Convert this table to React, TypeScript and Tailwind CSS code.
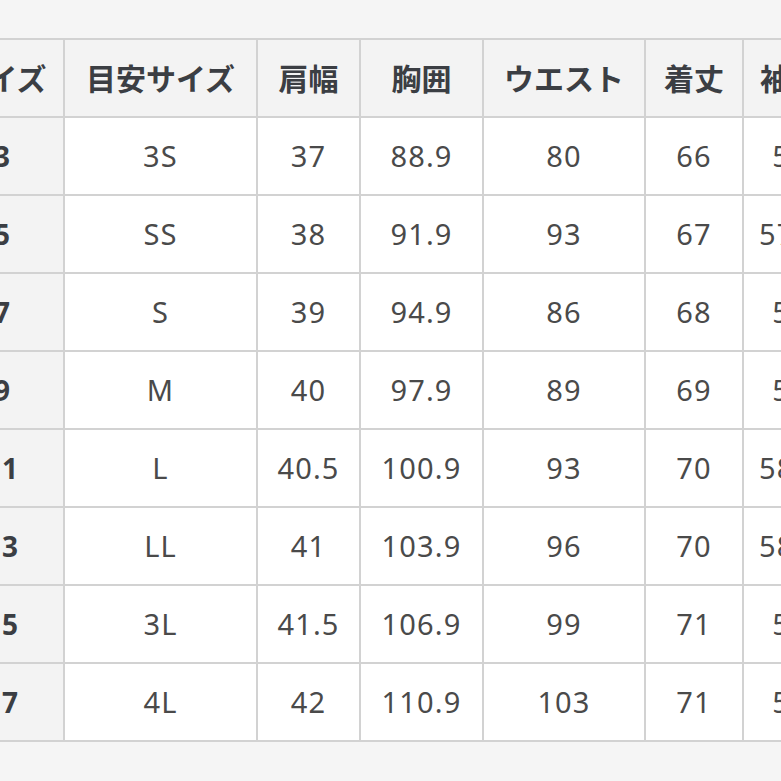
import React from "react";

type Row = {
  size: string;
  guide: string;
  shoulder: string;
  chest: string;
  waist: string;
  length: string;
  sleeve: string;
};

const rows: Row[] = [
  { size: "3", guide: "3S", shoulder: "37", chest: "88.9", waist: "80", length: "66", sleeve: "56" },
  { size: "5", guide: "SS", shoulder: "38", chest: "91.9", waist: "93", length: "67", sleeve: "57.5" },
  { size: "7", guide: "S", shoulder: "39", chest: "94.9", waist: "86", length: "68", sleeve: "58" },
  { size: "9", guide: "M", shoulder: "40", chest: "97.9", waist: "89", length: "69", sleeve: "58" },
  { size: "11", guide: "L", shoulder: "40.5", chest: "100.9", waist: "93", length: "70", sleeve: "58.5" },
  { size: "13", guide: "LL", shoulder: "41", chest: "103.9", waist: "96", length: "70", sleeve: "58.5" },
  { size: "15", guide: "3L", shoulder: "41.5", chest: "106.9", waist: "99", length: "71", sleeve: "59" },
  { size: "17", guide: "4L", shoulder: "42", chest: "110.9", waist: "103", length: "71", sleeve: "59" },
];

const headers = ["サイズ", "目安サイズ", "肩幅", "胸囲", "ウエスト", "着丈", "袖丈"];
const widths = ["w-[124px]", "w-[193px]", "w-[103px]", "w-[123px]", "w-[162px]", "w-[98px]", "w-[94px]"];

const SizeTable = () => {
  return (
    <table className="table-fixed border-collapse ml-[-61px] w-[897px]">
      <colgroup>
        {widths.map((w, i) => (
          <col key={i} className={w} />
        ))}
      </colgroup>
      <thead>
        <tr>
          {headers.map((h) => (
            <th
              key={h}
              className="h-[78px] border-2 border-[#d2d2d2] bg-[#f3f3f3] text-center text-[30px] font-bold text-[#3b3e43] whitespace-nowrap"
            >
              {h}
            </th>
          ))}
        </tr>
      </thead>
      <tbody>
        {rows.map((r) => (
          <tr key={r.size}>
            <th className="h-[78px] border-2 border-[#d2d2d2] bg-[#f3f3f3] text-center text-[28px] font-bold text-[#3b3e43]">
              {r.size}
            </th>
            {[r.guide, r.shoulder, r.chest, r.waist, r.length, r.sleeve].map((v, i) => (
              <td
                key={i}
                className="h-[78px] border-2 border-[#d2d2d2] bg-white text-center text-[29px] tracking-[0.04em] text-[#4a4a4a] whitespace-nowrap"
              >
                {v}
              </td>
            ))}
          </tr>
        ))}
      </tbody>
    </table>
  );
};

export default function App() {
  return (
    <div
      className="w-[781px] h-[781px] overflow-hidden bg-[#f5f5f5] pt-[38px]"
      style={{ fontFamily: '"Noto Sans", "Noto Sans CJK JP", sans-serif' }}
    >
      <SizeTable />
    </div>
  );
}
